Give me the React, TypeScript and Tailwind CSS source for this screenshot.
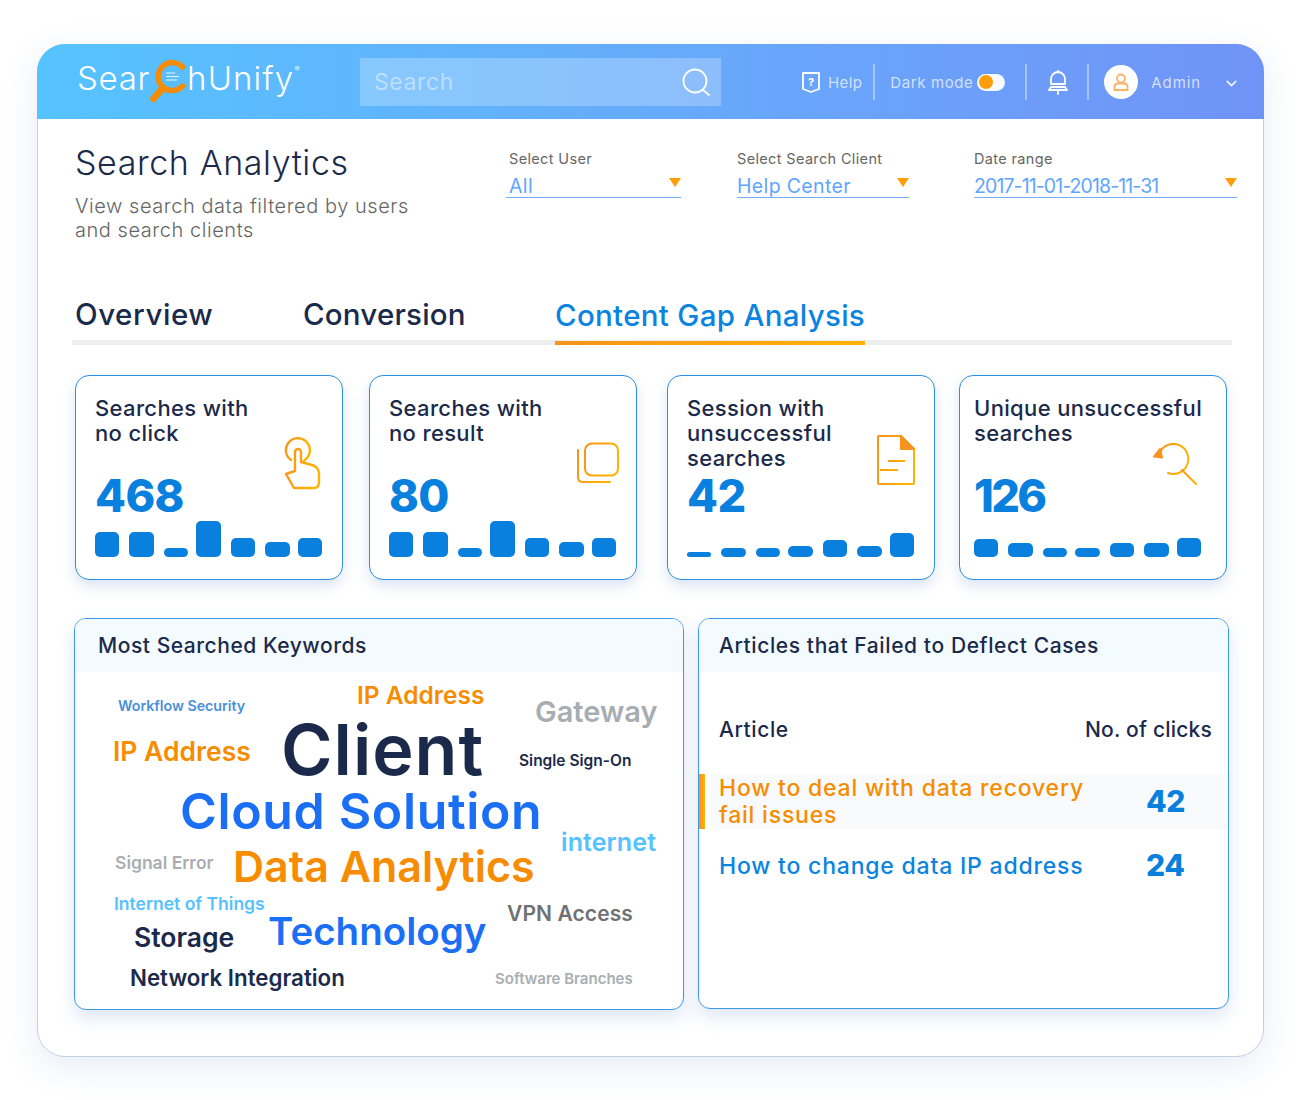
import React from "react";
import { ChevronDown } from "lucide-react";

const Grad = ({ id }: { id: string }) => (
  <defs>
    <linearGradient id={id} x1="0" y1="0" x2="1" y2="0.3">
      <stop offset="0" stopColor="#f7931e" />
      <stop offset="1" stopColor="#ffb300" />
    </linearGradient>
  </defs>
);

const HandIcon = () => (
  <svg width="37" height="53" viewBox="14 7 37 53" fill="none" stroke="url(#gh)" strokeWidth="2.4" strokeLinejoin="round" strokeLinecap="round">
    <Grad id="gh" />
    <path d="M21 30A12 12 0 1 1 34 30.500" />
    <path d="M25 41L16 44L24 58L44 58Q49 58 49 52L49 44Q49 37 42 35L31 32L31 22A3 3 0 0 0 25 22Z" />
  </svg>
);
const CopyIcon = () => (
  <svg width="42" height="41" viewBox="0 0 42 41" fill="none" stroke="url(#gc)" strokeWidth="2" strokeLinecap="round">
    <Grad id="gc" />
    <rect x="8" y="1.500" width="33" height="32" rx="7" />
    <path d="M1 8V35Q1 40 6 40H33" />
  </svg>
);
const DocIcon = () => (
  <svg width="38" height="50" viewBox="0 0 38 50" fill="none" stroke="url(#gd)" strokeWidth="2">
    <Grad id="gd" />
    <path d="M24 1H2Q1 1 1 2V48Q1 49 2 49H36Q37 49 37 48V14Z" />
    <path d="M24 1L37 14H24Z" fill="#f7931e" stroke="#f7931e" strokeLinejoin="round" />
    <path d="M11 26H28M3 35H21" />
  </svg>
);
const UndoSearchIcon = () => (
  <svg width="44" height="43" viewBox="0 0 44 43" fill="none" stroke="url(#gu)" strokeWidth="2" strokeLinecap="round">
    <Grad id="gu" />
    <path d="M7 9A15 15 0 1 1 15 30" />
    <path d="M29 27L43 41" />
    <path d="M1 13.500L9 14.500L7 6Z" fill="#f7931e" stroke="#f7931e" strokeLinejoin="round" />
  </svg>
);

const Logo = () => (
  <svg width="42" height="46" viewBox="0 0 42 46" fill="none" className="mt-[6px] mr-[-4px] ml-[-1px]">
    <path d="M35 11A14 14 0 1 0 35 26" stroke="#f78c00" strokeWidth="5.500" />
    <path d="M11 28L0 41L5 45L16 33Z" fill="#f78c00" />
    <path d="M17 15H26M17 18.500H30M17 22H28" stroke="#ffffff" strokeWidth="1.200" opacity="0.850" />
  </svg>
);

const Bars = ({ h }: { h: number[] }) => (
  <div className="flex items-end">
    {h.map((v, i) => (
      <div
        key={i}
        className={`w-[24.450px] rounded-[5px] bg-[#0a80de] ${i === 0 ? "" : i === 3 || i === 6 ? "ml-[8px]" : "ml-[10px]"}`}
        style={{ height: v }}
      />
    ))}
  </div>
);

const StatCard = ({ lines, value, bars, icon, cls, iconCls, numCls, barCls }: { lines: string[]; value: string; bars: number[]; icon: React.ReactNode; cls: string; iconCls: string; numCls: string; barCls: string }) => (
  <div className={`relative h-[205px] w-[268px] shrink-0 rounded-[14px] border border-[#2a8fe5] bg-white shadow-[0_6px_14px_rgba(90,130,210,0.22)] ${cls}`}>
    <div className="h-[72px] pt-[20px] text-[22px] leading-[25px] font-medium tracking-[0.35px] text-[#1b2a4a]">
      {lines.map((l) => (
        <div key={l} className="whitespace-nowrap">{l}</div>
      ))}
    </div>
    <div className={`mt-[26px] h-[44px] text-[45px] leading-[44px] font-extrabold text-[#0a80de] ${numCls}`}>{value}</div>
    <div className={`absolute bottom-[22px] ${barCls}`}>
      <Bars h={bars} />
    </div>
    <div className={`absolute ${iconCls}`}>{icon}</div>
  </div>
);

const Filter = ({ label, value, cls, labelCls, valueCls }: { label: string; value: string; cls: string; labelCls: string; valueCls: string }) => (
  <div className={cls}>
    <div className={`text-[14.500px] leading-[18px] tracking-[0.35px] text-[#666666] ${labelCls}`}>{label}</div>
    <div className={`relative mt-[5px] h-[25px] border-b border-[#72aef8] text-[19.500px] leading-[27px] text-[#5ea5ff] ${labelCls} ${valueCls}`}>
      {value}
      <div className="absolute top-[5px] right-0 h-0 w-0 border-x-[6px] border-t-[9.500px] border-x-transparent border-t-[#ff9d0a]" />
    </div>
  </div>
);

const words: { t: string; cls: string }[] = [
  { t: "Workflow Security", cls: "left-[43px] top-[27px] text-[14.200px] text-[#4a90d9]" },
  { t: "IP Address", cls: "left-[282px] top-[11px] text-[24.500px] text-[#f78c00]" },
  { t: "Gateway", cls: "left-[460px] top-[25px] text-[29px] text-[#a8adb2]" },
  { t: "Client", cls: "left-[206px] top-[43px] text-[70px] tracking-[1px] text-[#1b2a4a]" },
  { t: "IP Address", cls: "left-[38px] top-[66px] text-[26.500px] text-[#f78c00]" },
  { t: "Single Sign-On", cls: "left-[444px] top-[81px] text-[15.500px] text-[#1b2a4a]" },
  { t: "Cloud Solution", cls: "left-[105px] top-[114px] text-[50px] tracking-[0.65px] text-[#1a6ff5]" },
  { t: "internet", cls: "left-[486px] top-[158px] text-[25px] tracking-[0.1px] text-[#55c2ff]" },
  { t: "Signal Error", cls: "left-[40px] top-[182px] text-[17.500px] text-[#aaaeb2]" },
  { t: "Data Analytics", cls: "left-[158px] top-[173px] text-[43px] text-[#f78c00]" },
  { t: "Internet of Things", cls: "left-[39px] top-[223px] text-[17.500px] text-[#55c2ff]" },
  { t: "VPN Access", cls: "left-[432px] top-[231px] text-[21px] tracking-[0.1px] text-[#6f7173]" },
  { t: "Storage", cls: "left-[59px] top-[252px] text-[26.500px] text-[#1b2a4a]" },
  { t: "Technology", cls: "left-[193px] top-[240px] text-[38.500px] text-[#1a6ff5]" },
  { t: "Network Integration", cls: "left-[55px] top-[295px] text-[22.300px] text-[#1b2a4a]" },
  { t: "Software Branches", cls: "left-[420px] top-[299px] text-[15px] text-[#aaaeb2]" },
];

export default function App() {
  return (
    <div className="h-[1100px] w-[1300px] overflow-hidden bg-white pt-[44px] pl-[37px] font-['Inter',sans-serif]">
      <div className="h-[1013px] w-[1227px] rounded-[28px] border border-[#c3cfe4] bg-white shadow-[0_10px_34px_rgba(110,135,200,0.16)]">
        {/* header */}
        <div className="mx-[-1px] mt-[-1px] flex h-[75px] items-center rounded-t-[28px] bg-gradient-to-r from-[#55c3ff] to-[#7093f7] pt-[1px] pl-[40px] text-white">
          <div className="mb-[8px] flex w-[283px] items-center text-[33px] leading-none font-light tracking-[0.7px]">
            <span>Sear</span>
            <Logo />
            <span className="tracking-[1.100px]">hUnify</span>
            <span className="mt-[-18px] text-[8px]">®</span>
          </div>
          <div className="flex h-[48px] w-[361px] items-center justify-between bg-white/25 pr-[10px] pl-[14px]">
            <span className="text-[23px] tracking-[0.6px] text-white/45">Search</span>
            <svg width="30" height="30" viewBox="0 0 30 30" fill="none" stroke="#ffffff" strokeWidth="1.800" strokeLinecap="round">
              <circle cx="14" cy="14" r="11.500" />
              <path d="M22 23L28 28" />
            </svg>
          </div>
          <svg width="18" height="21" viewBox="0 0 18 21" fill="none" className="ml-[81px]">
            <path d="M1 1H17V17L9 20L1 17Z" stroke="#ffffff" strokeWidth="1.800" strokeLinejoin="round" />
            <text x="9" y="14" textAnchor="middle" fontSize="11" fontWeight="700" fill="#ffffff" fontFamily="Inter, sans-serif">?</text>
          </svg>
          <span className="mt-[2px] ml-[8px] text-[15px] tracking-[0.4px] text-white/70">Help</span>
          <div className="ml-[11px] h-[36px] w-[2px] bg-white/40" />
          <span className="mt-[2px] ml-[15px] text-[15px] tracking-[0.6px] text-white/70">Dark mode</span>
          <div className="ml-[4px] flex h-[17px] w-[28px] items-center rounded-full bg-white/95 pl-[2px]">
            <div className="h-[14px] w-[14px] rounded-full bg-[#ff9d0a]" />
          </div>
          <div className="ml-[20px] h-[36px] w-[2px] bg-white/40" />
          <svg width="20" height="25" viewBox="0 0 20 25" fill="none" stroke="#ffffff" strokeWidth="1.800" strokeLinecap="round" className="ml-[21px]">
            <path d="M10 1L10 2.500M3 14V9A7 7 0 0 1 17 9V14M1 20H19M1 20L3 17H17L19 20M3 14H17M10 20V24" />
          </svg>
          <div className="ml-[19px] h-[36px] w-[2px] bg-white/40" />
          <div className="ml-[15px] flex h-[34px] w-[34px] items-center justify-center rounded-full bg-white">
            <svg width="16" height="18" viewBox="0 0 16 18" fill="none" stroke="#ffb067" strokeWidth="1.800">
              <circle cx="8" cy="5.500" r="4" />
              <path d="M1.500 17V14Q1.500 10.500 5 10.500H11Q14.500 10.500 14.500 14V17Z" />
            </svg>
          </div>
          <span className="mt-[2px] ml-[13px] text-[15px] tracking-[0.9px] text-white/70">Admin</span>
          <ChevronDown className="mt-[2px] ml-[22px] h-[17px] w-[17px] text-white/85" strokeWidth={2.500} />
        </div>

        {/* title + filters */}
        <div className="flex h-[173px] pt-[26px] pl-[37px]">
          <div className="w-[431px]">
            <div className="text-[34px] leading-[36px] font-light tracking-[0.6px] text-[#1b2a4a]">Search Analytics</div>
            <div className="mt-[13px] text-[20px] leading-[24px] font-light tracking-[0.55px] text-[#666666]">
              View search data filtered by users
              <br />
              and search clients
            </div>
          </div>
          <div className="flex pt-[5px]">
            <Filter label="Select User" value="All" cls="w-[175px]" labelCls="pl-[3px]" valueCls="tracking-[0.35px]" />
            <Filter label="Select Search Client" value="Help Center" cls="ml-[56px] w-[172px]" labelCls="" valueCls="tracking-[0.35px]" />
            <Filter label="Date range" value="2017-11-01-2018-11-31" cls="ml-[65px] w-[263px]" labelCls="" valueCls="tracking-[-0.9px]" />
          </div>
        </div>

        {/* tabs */}
        <div className="ml-[34px] flex h-[53px] w-[1160px] items-end border-b-[5px] border-[#eeeeee] pl-[3px]">
          <div className="h-[43px] w-[228px] text-[29.500px] leading-[34px] font-medium tracking-[0.55px] text-[#1b2a4a]">Overview</div>
          <div className="h-[43px] w-[252px] text-[29.500px] leading-[34px] font-medium tracking-[0.2px] text-[#1b2a4a]">Conversion</div>
          <div className="mb-[-5px] h-[48px] w-[310px] border-b-[4px] border-transparent text-[29.500px] leading-[36px] font-medium tracking-[0.3px] whitespace-nowrap text-[#0a84e0] [border-image:linear-gradient(90deg,#f7931e,#ffb300)_1]">Content Gap Analysis</div>
        </div>

        {/* stats */}
        <div className="mt-[30px] flex pl-[37px]">
          <StatCard lines={["Searches with", "no click"]} value="468" bars={[25, 25, 9.5, 36.5, 19.5, 15, 19.5]} icon={<HandIcon />} cls="pl-[19px]" iconCls="left-[208px] top-[61px]" numCls="tracking-[-0.6px]" barCls="left-[19px]" />
          <StatCard lines={["Searches with", "no result"]} value="80" bars={[25, 25, 9.5, 36.5, 19.5, 15, 19.5]} icon={<CopyIcon />} cls="ml-[26px] pl-[19px]" iconCls="left-[207px] top-[66px]" numCls="tracking-[-0.6px]" barCls="left-[19px]" />
          <StatCard lines={["Session with", "unsuccessful", "searches"]} value="42" bars={[5, 9, 9, 11, 17, 11, 24.5]} icon={<DocIcon />} cls="ml-[30px] pl-[19px]" iconCls="left-[209px] top-[59px]" numCls="tracking-[-0.6px]" barCls="left-[19px]" />
          <StatCard lines={["Unique unsuccessful", "searches"]} value="126" bars={[18, 14, 9, 9, 14, 14, 19]} icon={<UndoSearchIcon />} cls="ml-[24px] pl-[14px]" iconCls="left-[193px] top-[67px]" numCls="tracking-[-2.700px]" barCls="left-[14px]" />
        </div>

        {/* panels */}
        <div className="mt-[38px] flex pl-[36px]">
          <div className="h-[392px] w-[610px] overflow-hidden rounded-[12px] border border-[#3b9ae8] bg-white shadow-[0_8px_18px_rgba(90,130,210,0.2)]">
            <div className="flex h-[53px] items-center bg-[#f4fbff] pl-[23px] text-[21px] font-medium tracking-[0.55px] text-[#1b2a4a]">Most Searched Keywords</div>
            <div className="relative h-[337px]">
              {words.map((w) => (
                <span key={w.t + w.cls} className={`absolute leading-none font-semibold whitespace-nowrap ${w.cls}`}>{w.t}</span>
              ))}
            </div>
          </div>
          <div className="ml-[14px] h-[391px] w-[531px] overflow-hidden rounded-[12px] border border-[#3b9ae8] bg-white shadow-[0_8px_18px_rgba(90,130,210,0.2)]">
            <div className="flex h-[53px] items-center bg-[#f4fbff] pl-[20px] text-[21px] font-medium tracking-[0.6px] text-[#1b2a4a]">Articles that Failed to Deflect Cases</div>
            <div className="mt-[45px] flex justify-between pr-[16px] pl-[20px] text-[21px] leading-[26px] font-medium tracking-[0.2px] text-[#1b2a4a]">
              <span className="tracking-[0.6px]">Article</span>
              <span>No. of clicks</span>
            </div>
            <div className="mt-[31px] flex h-[55px]">
              <div className="h-full w-[6px] bg-gradient-to-r from-[#f7931e] to-[#ffb300]" />
              <div className="ml-[6px] flex flex-1 items-center bg-[#f8fafc] pl-[8px]">
                <div className="w-[427px] pr-[40px] text-[23px] leading-[26.500px] font-medium tracking-[0.8px] text-[#f78c00]">How to deal with data recovery fail issues</div>
                <div className="mb-[2px] text-[30px] leading-none font-extrabold tracking-[-0.3px] text-[#0a80de]">42</div>
              </div>
            </div>
            <div className="mt-[21px] flex items-center pl-[20px]">
              <div className="w-[427px] pr-[40px] text-[23px] leading-[26.500px] font-medium tracking-[0.8px] whitespace-nowrap text-[#0a84e0]">How to change data IP address</div>
              <div className="mb-[2px] text-[30px] leading-none font-extrabold tracking-[-0.3px] text-[#0a80de]">24</div>
            </div>
          </div>
        </div>
      </div>
    </div>
  );
}
